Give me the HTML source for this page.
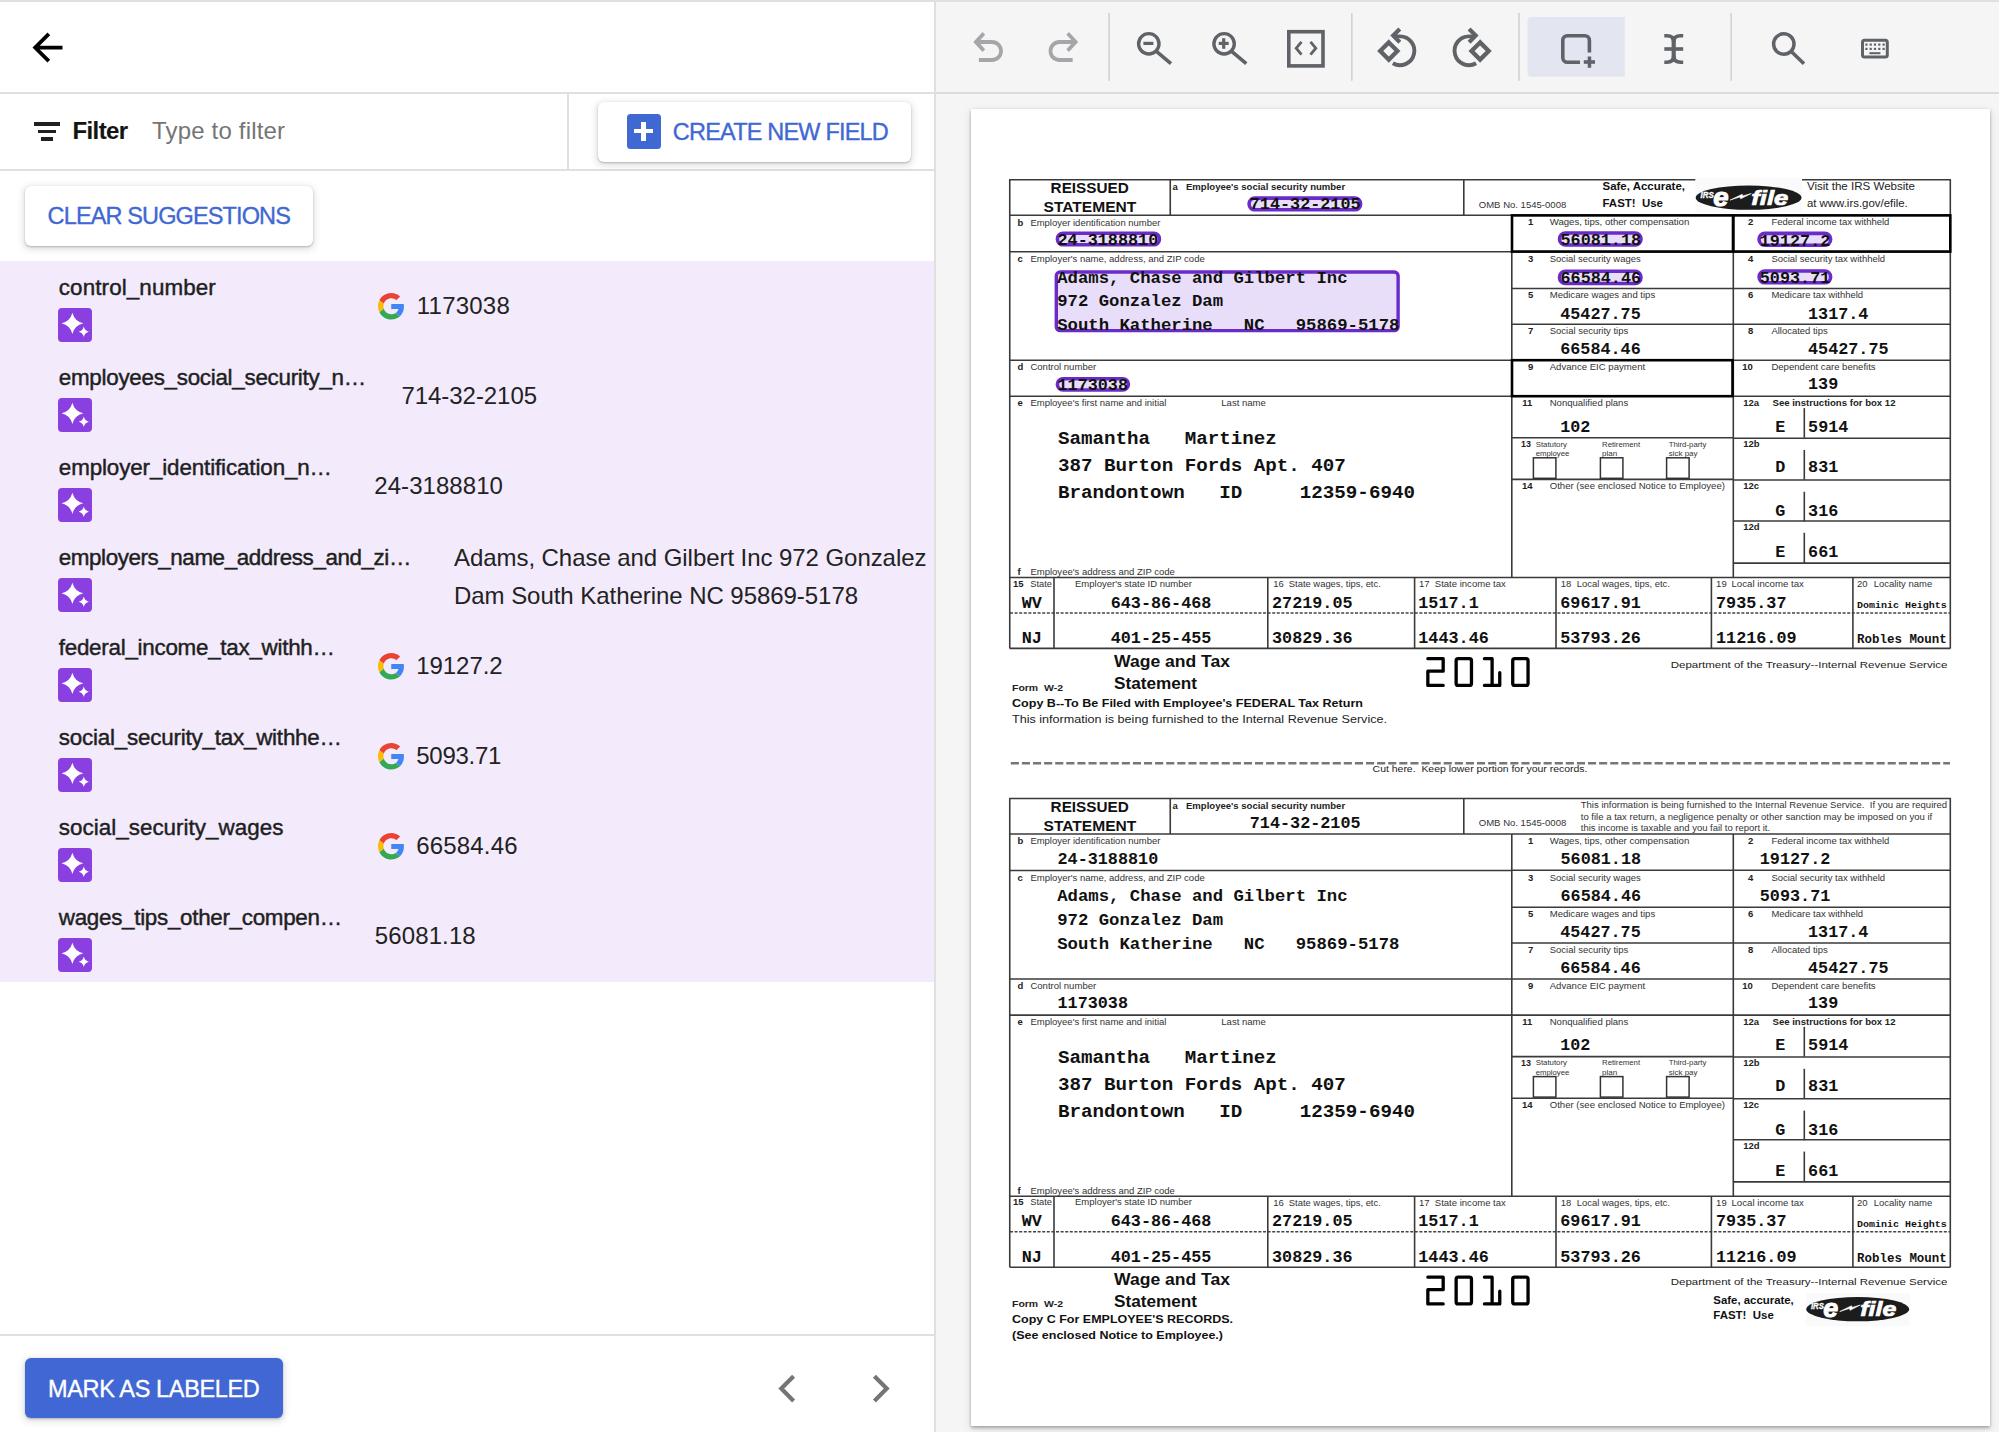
<!DOCTYPE html><html><head><meta charset="utf-8"><title>Labeling</title><style>
*{margin:0;padding:0;box-sizing:border-box}
html,body{width:1999px;height:1432px;overflow:hidden;background:#fff;font-family:"Liberation Sans",sans-serif}
.ht{position:absolute;white-space:pre;line-height:1.1172;font-family:"Liberation Sans",sans-serif}
.abs{position:absolute}
.s{font-family:"Liberation Sans",sans-serif;white-space:pre}
.m{font-family:"Liberation Mono",monospace;white-space:pre}
.docsvg{position:absolute;left:0;top:0}
</style></head><body><div class="abs" style="left:0;top:0;width:935px;height:1432px;background:#fff"></div><svg class="abs" style="left:24.5px;top:24.5px" width="45" height="45" viewBox="0 0 24 24"><path d="M20 11H7.83l5.59-5.59L12 4l-8 8 8 8 1.41-1.41L7.83 13H20v-2z" fill="#000"/></svg><div class="abs" style="left:0;top:92px;width:935px;height:2px;background:#e0e0e0"></div><div class="abs" style="left:34px;top:122px;width:26px;height:4px;background:#212121"></div><div class="abs" style="left:37.6px;top:129.8px;width:18.4px;height:3.6px;background:#212121"></div><div class="abs" style="left:41.2px;top:137.2px;width:11.6px;height:3.8px;background:#212121"></div><div class="ht" style="left:72.50px;top:118.08px;font-size:24.00px;font-weight:bold;letter-spacing:-0.613px;color:#141414;-webkit-text-stroke:0.1px #141414;">Filter</div><div class="ht" style="left:152.00px;top:118.08px;font-size:24.00px;letter-spacing:0.184px;color:#757575;">Type to filter</div><div class="abs" style="left:566.5px;top:94px;width:2px;height:75px;background:#e0e0e0"></div><div class="abs" style="left:0;top:169px;width:935px;height:2px;background:#e0e0e0"></div><div class="abs" style="left:598px;top:101.5px;width:313px;height:60px;border-radius:6px;background:#fff;box-shadow:0 1px 2px rgba(60,64,67,.30),0 2px 6px 2px rgba(60,64,67,.15)"></div><div class="abs" style="left:626.5px;top:114px;width:34px;height:34.5px;border-radius:3.5px;background:#3f68d3"></div><div class="abs" style="left:633.8px;top:129.2px;width:19.4px;height:4.2px;background:#fff"></div><div class="abs" style="left:641.4px;top:121.5px;width:4.2px;height:19.8px;background:#fff"></div><div class="ht" style="left:672.80px;top:118.73px;font-size:23.50px;letter-spacing:-0.804px;color:#3f68d3;-webkit-text-stroke:0.35px #3f68d3;">CREATE NEW FIELD</div><div class="abs" style="left:24.5px;top:186.2px;width:288.5px;height:59.8px;border-radius:6px;background:#fff;box-shadow:0 1px 2px rgba(60,64,67,.30),0 2px 6px 2px rgba(60,64,67,.15)"></div><div class="ht" style="left:47.60px;top:203.33px;font-size:23.50px;letter-spacing:-0.874px;color:#3f68d3;-webkit-text-stroke:0.35px #3f68d3;">CLEAR SUGGESTIONS</div><div class="abs" style="left:0;top:261px;width:935px;height:721px;background:#f3ebfc"></div><div class="ht" style="left:58.80px;top:274.73px;font-size:22.40px;letter-spacing:0.111px;color:#1f1f1f;-webkit-text-stroke:0.45px #1f1f1f;">control_number</div><svg class="abs" style="left:58.0px;top:308.2px" width="34" height="34" viewBox="0 0 34 34"><rect width="34" height="34" rx="4" fill="#8a3fe0"/><path d="M14.40 4.70 Q16.58 13.18 25.30 15.30 Q16.58 17.42 14.40 25.90 Q12.22 17.42 3.50 15.30 Q12.22 13.18 14.40 4.70 Z" fill="#fff"/><path d="M25.80 18.60 Q26.82 22.76 30.90 23.80 Q26.82 24.84 25.80 29.00 Q24.78 24.84 20.70 23.80 Q24.78 22.76 25.80 18.60 Z" fill="#fff"/></svg><svg class="abs" style="left:377.5px;top:293.2px" width="26.5" height="26.5" viewBox="0 0 48 48"><path fill="#EA4335" d="M24 9.5c3.54 0 6.71 1.22 9.21 3.6l6.85-6.85C35.9 2.38 30.47 0 24 0 14.62 0 6.51 5.38 2.56 13.22l7.98 6.19C12.43 13.72 17.74 9.5 24 9.5z"/><path fill="#4285F4" d="M46.98 24.55c0-1.57-.15-3.09-.38-4.55H24v9.02h12.94c-.58 2.96-2.26 5.48-4.78 7.18l7.73 6c4.51-4.18 7.09-10.36 7.09-17.65z"/><path fill="#FBBC05" d="M10.53 28.59c-.48-1.45-.76-2.99-.76-4.59s.27-3.14.76-4.59l-7.98-6.19C.92 16.46 0 20.12 0 24c0 3.88.92 7.54 2.56 10.78l7.97-6.19z"/><path fill="#34A853" d="M24 48c6.48 0 11.93-2.13 15.89-5.81l-7.73-6c-2.15 1.45-4.92 2.3-8.16 2.3-6.26 0-11.57-4.22-13.47-9.91l-7.98 6.19C6.51 42.62 14.62 48 24 48z"/></svg><div class="ht" style="left:416.80px;top:293.28px;font-size:24.00px;letter-spacing:0.221px;color:#222;">1173038</div><div class="ht" style="left:58.80px;top:364.73px;font-size:22.40px;letter-spacing:-0.279px;color:#1f1f1f;-webkit-text-stroke:0.45px #1f1f1f;">employees_social_security_n…</div><svg class="abs" style="left:58.0px;top:398.2px" width="34" height="34" viewBox="0 0 34 34"><rect width="34" height="34" rx="4" fill="#8a3fe0"/><path d="M14.40 4.70 Q16.58 13.18 25.30 15.30 Q16.58 17.42 14.40 25.90 Q12.22 17.42 3.50 15.30 Q12.22 13.18 14.40 4.70 Z" fill="#fff"/><path d="M25.80 18.60 Q26.82 22.76 30.90 23.80 Q26.82 24.84 25.80 29.00 Q24.78 24.84 20.70 23.80 Q24.78 22.76 25.80 18.60 Z" fill="#fff"/></svg><div class="ht" style="left:401.50px;top:383.28px;font-size:24.00px;letter-spacing:-0.056px;color:#222;">714-32-2105</div><div class="ht" style="left:58.80px;top:454.73px;font-size:22.40px;letter-spacing:-0.124px;color:#1f1f1f;-webkit-text-stroke:0.45px #1f1f1f;">employer_identification_n…</div><svg class="abs" style="left:58.0px;top:488.2px" width="34" height="34" viewBox="0 0 34 34"><rect width="34" height="34" rx="4" fill="#8a3fe0"/><path d="M14.40 4.70 Q16.58 13.18 25.30 15.30 Q16.58 17.42 14.40 25.90 Q12.22 17.42 3.50 15.30 Q12.22 13.18 14.40 4.70 Z" fill="#fff"/><path d="M25.80 18.60 Q26.82 22.76 30.90 23.80 Q26.82 24.84 25.80 29.00 Q24.78 24.84 20.70 23.80 Q24.78 22.76 25.80 18.60 Z" fill="#fff"/></svg><div class="ht" style="left:374.30px;top:473.28px;font-size:24.00px;letter-spacing:0.057px;color:#222;">24-3188810</div><div class="ht" style="left:58.80px;top:544.73px;font-size:22.40px;letter-spacing:-0.421px;color:#1f1f1f;-webkit-text-stroke:0.45px #1f1f1f;">employers_name_address_and_zi…</div><svg class="abs" style="left:58.0px;top:578.2px" width="34" height="34" viewBox="0 0 34 34"><rect width="34" height="34" rx="4" fill="#8a3fe0"/><path d="M14.40 4.70 Q16.58 13.18 25.30 15.30 Q16.58 17.42 14.40 25.90 Q12.22 17.42 3.50 15.30 Q12.22 13.18 14.40 4.70 Z" fill="#fff"/><path d="M25.80 18.60 Q26.82 22.76 30.90 23.80 Q26.82 24.84 25.80 29.00 Q24.78 24.84 20.70 23.80 Q24.78 22.76 25.80 18.60 Z" fill="#fff"/></svg><div class="ht" style="left:454.00px;top:545.08px;font-size:24.00px;letter-spacing:-0.062px;color:#222;">Adams, Chase and Gilbert Inc 972 Gonzalez</div><div class="ht" style="left:454.00px;top:582.58px;font-size:24.00px;letter-spacing:-0.048px;color:#222;">Dam South Katherine NC 95869-5178</div><div class="ht" style="left:58.80px;top:634.73px;font-size:22.40px;letter-spacing:-0.266px;color:#1f1f1f;-webkit-text-stroke:0.45px #1f1f1f;">federal_income_tax_withh…</div><svg class="abs" style="left:58.0px;top:668.2px" width="34" height="34" viewBox="0 0 34 34"><rect width="34" height="34" rx="4" fill="#8a3fe0"/><path d="M14.40 4.70 Q16.58 13.18 25.30 15.30 Q16.58 17.42 14.40 25.90 Q12.22 17.42 3.50 15.30 Q12.22 13.18 14.40 4.70 Z" fill="#fff"/><path d="M25.80 18.60 Q26.82 22.76 30.90 23.80 Q26.82 24.84 25.80 29.00 Q24.78 24.84 20.70 23.80 Q24.78 22.76 25.80 18.60 Z" fill="#fff"/></svg><svg class="abs" style="left:377.5px;top:653.2px" width="26.5" height="26.5" viewBox="0 0 48 48"><path fill="#EA4335" d="M24 9.5c3.54 0 6.71 1.22 9.21 3.6l6.85-6.85C35.9 2.38 30.47 0 24 0 14.62 0 6.51 5.38 2.56 13.22l7.98 6.19C12.43 13.72 17.74 9.5 24 9.5z"/><path fill="#4285F4" d="M46.98 24.55c0-1.57-.15-3.09-.38-4.55H24v9.02h12.94c-.58 2.96-2.26 5.48-4.78 7.18l7.73 6c4.51-4.18 7.09-10.36 7.09-17.65z"/><path fill="#FBBC05" d="M10.53 28.59c-.48-1.45-.76-2.99-.76-4.59s.27-3.14.76-4.59l-7.98-6.19C.92 16.46 0 20.12 0 24c0 3.88.92 7.54 2.56 10.78l7.97-6.19z"/><path fill="#34A853" d="M24 48c6.48 0 11.93-2.13 15.89-5.81l-7.73-6c-2.15 1.45-4.92 2.3-8.16 2.3-6.26 0-11.57-4.22-13.47-9.91l-7.98 6.19C6.51 42.62 14.62 48 24 48z"/></svg><div class="ht" style="left:416.20px;top:653.28px;font-size:24.00px;letter-spacing:-0.037px;color:#222;">19127.2</div><div class="ht" style="left:58.80px;top:724.73px;font-size:22.40px;letter-spacing:-0.213px;color:#1f1f1f;-webkit-text-stroke:0.45px #1f1f1f;">social_security_tax_withhe…</div><svg class="abs" style="left:58.0px;top:758.2px" width="34" height="34" viewBox="0 0 34 34"><rect width="34" height="34" rx="4" fill="#8a3fe0"/><path d="M14.40 4.70 Q16.58 13.18 25.30 15.30 Q16.58 17.42 14.40 25.90 Q12.22 17.42 3.50 15.30 Q12.22 13.18 14.40 4.70 Z" fill="#fff"/><path d="M25.80 18.60 Q26.82 22.76 30.90 23.80 Q26.82 24.84 25.80 29.00 Q24.78 24.84 20.70 23.80 Q24.78 22.76 25.80 18.60 Z" fill="#fff"/></svg><svg class="abs" style="left:377.5px;top:743.2px" width="26.5" height="26.5" viewBox="0 0 48 48"><path fill="#EA4335" d="M24 9.5c3.54 0 6.71 1.22 9.21 3.6l6.85-6.85C35.9 2.38 30.47 0 24 0 14.62 0 6.51 5.38 2.56 13.22l7.98 6.19C12.43 13.72 17.74 9.5 24 9.5z"/><path fill="#4285F4" d="M46.98 24.55c0-1.57-.15-3.09-.38-4.55H24v9.02h12.94c-.58 2.96-2.26 5.48-4.78 7.18l7.73 6c4.51-4.18 7.09-10.36 7.09-17.65z"/><path fill="#FBBC05" d="M10.53 28.59c-.48-1.45-.76-2.99-.76-4.59s.27-3.14.76-4.59l-7.98-6.19C.92 16.46 0 20.12 0 24c0 3.88.92 7.54 2.56 10.78l7.97-6.19z"/><path fill="#34A853" d="M24 48c6.48 0 11.93-2.13 15.89-5.81l-7.73-6c-2.15 1.45-4.92 2.3-8.16 2.3-6.26 0-11.57-4.22-13.47-9.91l-7.98 6.19C6.51 42.62 14.62 48 24 48z"/></svg><div class="ht" style="left:416.20px;top:743.28px;font-size:24.00px;letter-spacing:-0.251px;color:#222;">5093.71</div><div class="ht" style="left:58.80px;top:814.73px;font-size:22.40px;letter-spacing:0.028px;color:#1f1f1f;-webkit-text-stroke:0.45px #1f1f1f;">social_security_wages</div><svg class="abs" style="left:58.0px;top:848.2px" width="34" height="34" viewBox="0 0 34 34"><rect width="34" height="34" rx="4" fill="#8a3fe0"/><path d="M14.40 4.70 Q16.58 13.18 25.30 15.30 Q16.58 17.42 14.40 25.90 Q12.22 17.42 3.50 15.30 Q12.22 13.18 14.40 4.70 Z" fill="#fff"/><path d="M25.80 18.60 Q26.82 22.76 30.90 23.80 Q26.82 24.84 25.80 29.00 Q24.78 24.84 20.70 23.80 Q24.78 22.76 25.80 18.60 Z" fill="#fff"/></svg><svg class="abs" style="left:377.5px;top:833.2px" width="26.5" height="26.5" viewBox="0 0 48 48"><path fill="#EA4335" d="M24 9.5c3.54 0 6.71 1.22 9.21 3.6l6.85-6.85C35.9 2.38 30.47 0 24 0 14.62 0 6.51 5.38 2.56 13.22l7.98 6.19C12.43 13.72 17.74 9.5 24 9.5z"/><path fill="#4285F4" d="M46.98 24.55c0-1.57-.15-3.09-.38-4.55H24v9.02h12.94c-.58 2.96-2.26 5.48-4.78 7.18l7.73 6c4.51-4.18 7.09-10.36 7.09-17.65z"/><path fill="#FBBC05" d="M10.53 28.59c-.48-1.45-.76-2.99-.76-4.59s.27-3.14.76-4.59l-7.98-6.19C.92 16.46 0 20.12 0 24c0 3.88.92 7.54 2.56 10.78l7.97-6.19z"/><path fill="#34A853" d="M24 48c6.48 0 11.93-2.13 15.89-5.81l-7.73-6c-2.15 1.45-4.92 2.3-8.16 2.3-6.26 0-11.57-4.22-13.47-9.91l-7.98 6.19C6.51 42.62 14.62 48 24 48z"/></svg><div class="ht" style="left:416.20px;top:833.28px;font-size:24.00px;letter-spacing:0.174px;color:#222;">66584.46</div><div class="ht" style="left:58.80px;top:904.73px;font-size:22.40px;letter-spacing:-0.293px;color:#1f1f1f;-webkit-text-stroke:0.45px #1f1f1f;">wages_tips_other_compen…</div><svg class="abs" style="left:58.0px;top:938.2px" width="34" height="34" viewBox="0 0 34 34"><rect width="34" height="34" rx="4" fill="#8a3fe0"/><path d="M14.40 4.70 Q16.58 13.18 25.30 15.30 Q16.58 17.42 14.40 25.90 Q12.22 17.42 3.50 15.30 Q12.22 13.18 14.40 4.70 Z" fill="#fff"/><path d="M25.80 18.60 Q26.82 22.76 30.90 23.80 Q26.82 24.84 25.80 29.00 Q24.78 24.84 20.70 23.80 Q24.78 22.76 25.80 18.60 Z" fill="#fff"/></svg><div class="ht" style="left:374.80px;top:923.28px;font-size:24.00px;letter-spacing:0.112px;color:#222;">56081.18</div><div class="abs" style="left:0;top:1334px;width:935px;height:2px;background:#e0e0e0"></div><div class="abs" style="left:24.5px;top:1358.4px;width:258px;height:59.6px;border-radius:6px;background:#4067d3;box-shadow:0 1px 2px rgba(60,64,67,.30),0 2px 6px 2px rgba(60,64,67,.15)"></div><div class="ht" style="left:48.00px;top:1376.03px;font-size:23.50px;letter-spacing:-0.361px;color:#fff;-webkit-text-stroke:0.35px #fff;">MARK AS LABELED</div><svg class="abs" style="left:750px;top:1360px" width="180" height="60" viewBox="750 1360 180 60"><path d="M793.6 1376.3 L781.3 1388.6 L793.6 1400.9" fill="none" stroke="#757575" stroke-width="4.2"/><path d="M874.4 1376.3 L886.7 1388.6 L874.4 1400.9" fill="none" stroke="#757575" stroke-width="4.2"/></svg><div class="abs" style="left:934px;top:0;width:2px;height:1432px;background:#e0e0e0"></div><div class="abs" style="left:936px;top:0;width:1063px;height:1432px;background:#f5f5f5"></div><div class="abs" style="left:936px;top:92px;width:1063px;height:2px;background:#dcdcdc"></div><div class="abs" style="left:0;top:0;width:1999px;height:2px;background:#e0e0e0"></div><svg class="abs" style="left:936px;top:0" width="1063" height="92" viewBox="936 0 1063 92"><rect x="1108.3" y="13" width="1.6" height="67.8" fill="#d2d2d2"/><rect x="1351.0" y="13" width="1.6" height="67.8" fill="#d2d2d2"/><rect x="1518.2" y="13" width="1.6" height="67.8" fill="#d2d2d2"/><rect x="1730.4" y="13" width="1.6" height="67.8" fill="#d2d2d2"/><path d="M1531.5 17 H1624.8 V76.8 H1531.5 A4 4 0 0 1 1527.5 72.8 V21 A4 4 0 0 1 1531.5 17Z" fill="#e3e5f1"/><path transform="translate(965.900 72.000) scale(0.04625 0.05000)" d="M280-200v-80h284q63 0 109.5-40T720-420q0-60-46.5-100T564-560H312l104 104-56 56-200-200 200-200 56 56-104 104h252q97 0 166.5 63T800-420q0 94-69.5 157T564-200H280Z" fill="#a4a6aa"/><path transform="translate(1041.200 72.000) scale(0.04625 0.05000)" d="M396-200q-97 0-166.5-63T160-420q0-94 69.5-157T396-640h252L544-744l56-56 200 200-200 200-56-56 104-104H396q-63 0-109.5 40T240-420q0 60 46.5 100T396-280h284v80H396Z" fill="#a4a6aa"/><circle cx="1148.80" cy="43.80" r="10.2" fill="none" stroke="#5f6368" stroke-width="3.4"/><line x1="1155.80" y1="50.80" x2="1171.00" y2="63.60" stroke="#5f6368" stroke-width="3.6"/><rect x="1143.40" y="41.80" width="10" height="3.2" fill="#5f6368"/><circle cx="1224.10" cy="43.80" r="10.2" fill="none" stroke="#5f6368" stroke-width="3.4"/><line x1="1231.10" y1="50.80" x2="1246.30" y2="63.60" stroke="#5f6368" stroke-width="3.6"/><rect x="1218.70" y="41.80" width="10" height="3.2" fill="#5f6368"/><rect x="1222.10" y="38.20" width="3.2" height="10.6" fill="#5f6368"/><rect x="1288.8" y="31.7" width="34.2" height="34.2" fill="none" stroke="#5f6368" stroke-width="3.6"/><path d="M1301.5 41.8 L1296.2 48.2 L1301.5 54.6 M1310.5 41.8 L1315.8 48.2 L1310.5 54.6" fill="none" stroke="#5f6368" stroke-width="2.8"/><g transform="translate(1377.20 0) scale(1 1)"><path d="M11.6 42.4 L20.2 51 L11.6 59.6 L3.0 51 Z" fill="none" stroke="#5f6368" stroke-width="4.3"/><path d="M15.6 63.3 A14.4 14.4 0 1 0 22.8 36.4 L18 36.4" fill="none" stroke="#5f6368" stroke-width="3.9"/><path d="M22.6 29.0 L16.0 35.6 L22.6 42.2" fill="none" stroke="#5f6368" stroke-width="4.1"/></g><g transform="translate(1491.70 0) scale(-1 1)"><path d="M11.6 42.4 L20.2 51 L11.6 59.6 L3.0 51 Z" fill="none" stroke="#5f6368" stroke-width="4.3"/><path d="M15.6 63.3 A14.4 14.4 0 1 0 22.8 36.4 L18 36.4" fill="none" stroke="#5f6368" stroke-width="3.9"/><path d="M22.6 29.0 L16.0 35.6 L22.6 42.2" fill="none" stroke="#5f6368" stroke-width="4.1"/></g><path d="M1580 62.2 H1567.3 A4.5 4.5 0 0 1 1562.8 57.7 V40.3 A4.5 4.5 0 0 1 1567.3 35.8 H1584.9 A4.5 4.5 0 0 1 1589.4 40.3 V52.6" fill="none" stroke="#5f6368" stroke-width="3.6"/><rect x="1587.7" y="56.5" width="3.5" height="11.3" fill="#5f6368"/><rect x="1583.8" y="60.2" width="11.2" height="3.6" fill="#5f6368"/><rect x="1671.6" y="36" width="4.2" height="26" fill="#5f6368"/><rect x="1664.3" y="47.2" width="18.9" height="3.6" fill="#5f6368"/><path d="M1664.3 35.8 H1667 Q1673.7 35.8 1673.7 42 Q1673.7 35.8 1680.5 35.8 H1683.2" fill="none" stroke="#5f6368" stroke-width="3.6"/><path d="M1664.3 62.2 H1667 Q1673.7 62.2 1673.7 56 Q1673.7 62.2 1680.5 62.2 H1683.2" fill="none" stroke="#5f6368" stroke-width="3.6"/><circle cx="1783.8" cy="44" r="10.2" fill="none" stroke="#5f6368" stroke-width="3.5"/><line x1="1791" y1="51.2" x2="1804" y2="63.8" stroke="#5f6368" stroke-width="3.6"/><rect x="1862.5" y="40.3" width="24.8" height="16.8" rx="2" fill="none" stroke="#5f6368" stroke-width="3"/><rect x="1865.30" y="43.50" width="2.2" height="2.2" fill="#5f6368"/><rect x="1869.60" y="43.50" width="2.2" height="2.2" fill="#5f6368"/><rect x="1873.90" y="43.50" width="2.2" height="2.2" fill="#5f6368"/><rect x="1878.20" y="43.50" width="2.2" height="2.2" fill="#5f6368"/><rect x="1882.50" y="43.50" width="2.2" height="2.2" fill="#5f6368"/><rect x="1865.30" y="47.80" width="2.2" height="2.2" fill="#5f6368"/><rect x="1869.60" y="47.80" width="2.2" height="2.2" fill="#5f6368"/><rect x="1873.90" y="47.80" width="2.2" height="2.2" fill="#5f6368"/><rect x="1878.20" y="47.80" width="2.2" height="2.2" fill="#5f6368"/><rect x="1882.50" y="47.80" width="2.2" height="2.2" fill="#5f6368"/><rect x="1869.4" y="52.2" width="11" height="2" fill="#5f6368"/></svg><div class="abs" style="left:971px;top:109px;width:1019px;height:1317px;background:#fff;box-shadow:0 2px 3px rgba(0,0,0,.26),0 3px 10px rgba(0,0,0,.10),0 0 2px rgba(0,0,0,.10)"><svg class="docsvg" width="1019" height="1317" viewBox="971 109 1019 1317"><line x1="1009.05" y1="179.75" x2="1695.60" y2="179.75" stroke="#3a3a3a" stroke-width="1.60"/><line x1="1801.50" y1="179.75" x2="1951.00" y2="179.75" stroke="#3a3a3a" stroke-width="1.60"/><rect x="1695.5" y="178.00" width="106.5" height="35" fill="#fafafa"/><line x1="1009.75" y1="179.75" x2="1009.75" y2="648.40" stroke="#3a3a3a" stroke-width="1.60"/><line x1="1950.30" y1="179.75" x2="1950.30" y2="648.40" stroke="#3a3a3a" stroke-width="1.60"/><line x1="1170.25" y1="179.75" x2="1170.25" y2="215.25" stroke="#3a3a3a" stroke-width="1.60"/><line x1="1463.80" y1="179.75" x2="1463.80" y2="215.25" stroke="#3a3a3a" stroke-width="1.60"/><line x1="1009.75" y1="215.25" x2="1511.80" y2="215.25" stroke="#3a3a3a" stroke-width="1.60"/><line x1="1009.75" y1="251.70" x2="1511.80" y2="251.70" stroke="#3a3a3a" stroke-width="1.60"/><line x1="1009.75" y1="360.20" x2="1511.80" y2="360.20" stroke="#3a3a3a" stroke-width="1.60"/><line x1="1009.75" y1="396.30" x2="1511.80" y2="396.30" stroke="#3a3a3a" stroke-width="1.60"/><line x1="1511.80" y1="215.20" x2="1511.80" y2="577.50" stroke="#3a3a3a" stroke-width="1.60"/><line x1="1733.30" y1="215.20" x2="1733.30" y2="577.50" stroke="#3a3a3a" stroke-width="1.60"/><line x1="1511.80" y1="215.25" x2="1950.30" y2="215.25" stroke="#3a3a3a" stroke-width="1.60"/><line x1="1511.80" y1="251.50" x2="1950.30" y2="251.50" stroke="#3a3a3a" stroke-width="1.60"/><line x1="1511.80" y1="288.50" x2="1950.30" y2="288.50" stroke="#3a3a3a" stroke-width="1.60"/><line x1="1511.80" y1="324.20" x2="1950.30" y2="324.20" stroke="#3a3a3a" stroke-width="1.60"/><line x1="1511.80" y1="360.20" x2="1950.30" y2="360.20" stroke="#3a3a3a" stroke-width="1.60"/><line x1="1511.80" y1="396.30" x2="1950.30" y2="396.30" stroke="#3a3a3a" stroke-width="1.60"/><line x1="1511.80" y1="437.80" x2="1733.30" y2="437.80" stroke="#3a3a3a" stroke-width="1.60"/><line x1="1511.80" y1="479.40" x2="1733.30" y2="479.40" stroke="#3a3a3a" stroke-width="1.60"/><line x1="1733.30" y1="438.20" x2="1950.30" y2="438.20" stroke="#3a3a3a" stroke-width="1.60"/><line x1="1733.30" y1="480.00" x2="1950.30" y2="480.00" stroke="#3a3a3a" stroke-width="1.60"/><line x1="1733.30" y1="521.00" x2="1950.30" y2="521.00" stroke="#3a3a3a" stroke-width="1.60"/><line x1="1733.30" y1="563.10" x2="1950.30" y2="563.10" stroke="#3a3a3a" stroke-width="1.60"/><line x1="1804.30" y1="408.10" x2="1804.30" y2="437.80" stroke="#3a3a3a" stroke-width="1.60"/><line x1="1804.30" y1="450.00" x2="1804.30" y2="479.70" stroke="#3a3a3a" stroke-width="1.60"/><line x1="1804.30" y1="491.80" x2="1804.30" y2="521.50" stroke="#3a3a3a" stroke-width="1.60"/><line x1="1804.30" y1="532.80" x2="1804.30" y2="563.10" stroke="#3a3a3a" stroke-width="1.60"/><rect x="1512" y="215.40" width="221" height="36.2" fill="none" stroke="#000" stroke-width="2.60"/><rect x="1733.3" y="215.40" width="217" height="36.2" fill="none" stroke="#000" stroke-width="2.60"/><rect x="1512" y="360.20" width="220.5" height="36" fill="none" stroke="#000" stroke-width="2.60"/><rect x="1533.40" y="457.80" width="22.5" height="20.5" fill="none" stroke="#333" stroke-width="1.5"/><rect x="1600.40" y="457.80" width="22.5" height="20.5" fill="none" stroke="#333" stroke-width="1.5"/><rect x="1666.60" y="457.80" width="22.5" height="20.5" fill="none" stroke="#333" stroke-width="1.5"/><line x1="1009.75" y1="577.50" x2="1950.30" y2="577.50" stroke="#3a3a3a" stroke-width="1.60"/><line x1="1009.75" y1="648.40" x2="1950.30" y2="648.40" stroke="#3a3a3a" stroke-width="1.60"/><line x1="1010" y1="613.00" x2="1950" y2="613.00" stroke="#444" stroke-width="1.5" stroke-dasharray="3 1.6"/><line x1="1054.00" y1="577.50" x2="1054.00" y2="648.40" stroke="#3a3a3a" stroke-width="1.60"/><line x1="1267.80" y1="577.50" x2="1267.80" y2="648.40" stroke="#3a3a3a" stroke-width="1.60"/><line x1="1414.60" y1="577.50" x2="1414.60" y2="648.40" stroke="#3a3a3a" stroke-width="1.60"/><line x1="1556.00" y1="577.50" x2="1556.00" y2="648.40" stroke="#3a3a3a" stroke-width="1.60"/><line x1="1711.40" y1="577.50" x2="1711.40" y2="648.40" stroke="#3a3a3a" stroke-width="1.60"/><line x1="1852.90" y1="577.50" x2="1852.90" y2="648.40" stroke="#3a3a3a" stroke-width="1.60"/><text class="s" x="1089.70" y="192.75" font-size="15.30" font-weight="bold" fill="#111" textLength="78.20" lengthAdjust="spacingAndGlyphs" text-anchor="middle">REISSUED</text><text class="s" x="1089.90" y="212.25" font-size="15.40" font-weight="bold" fill="#111" textLength="92.70" lengthAdjust="spacingAndGlyphs" text-anchor="middle">STATEMENT</text><text class="s" x="1172.50" y="189.75" font-size="9.50" font-weight="bold" fill="#222">a</text><text class="s" x="1186.00" y="189.70" font-size="9.50" font-weight="bold" fill="#222" textLength="159.10" lengthAdjust="spacingAndGlyphs">Employee&#x27;s social security number</text><text class="s" x="1478.75" y="207.60" font-size="9.50" fill="#333" textLength="87.50" lengthAdjust="spacingAndGlyphs">OMB No. 1545-0008</text><text class="s" x="1602.50" y="189.50" font-size="11.40" font-weight="bold" fill="#111" textLength="82.50" lengthAdjust="spacingAndGlyphs">Safe, Accurate,</text><text class="s" x="1602.50" y="207.25" font-size="11.40" font-weight="bold" fill="#111" textLength="60.50" lengthAdjust="spacingAndGlyphs">FAST!  Use</text><g><ellipse cx="1748.60" cy="197.65" rx="52.90" ry="12.15" fill="#1c1c1c"/><text x="1700.46" y="197.89" font-size="8.75" font-weight="bold" font-style="italic" fill="#fff" stroke="#fff" stroke-width="0.30" class="s" textLength="13.22" lengthAdjust="spacingAndGlyphs">IRS</text><text x="1713.16" y="205.67" font-size="25.52" font-weight="bold" font-style="italic" fill="#fff" stroke="#fff" stroke-width="1.00" class="s" textLength="15.34" lengthAdjust="spacingAndGlyphs">e</text><text x="1751.25" y="204.94" font-size="19.93" font-weight="bold" font-style="italic" fill="#fff" stroke="#fff" stroke-width="0.70" class="s" textLength="37.03" lengthAdjust="spacingAndGlyphs">file</text><path d="M1730.09 200.08 L1740.14 196.92 L1740.66 198.87 L1751.25 193.52 L1742.78 195.95 L1742.25 194.25 Z" fill="#fff" stroke="#fff" stroke-width="0.6"/></g><text class="s" x="1806.90" y="189.80" font-size="11.40" fill="#222" textLength="108.10" lengthAdjust="spacingAndGlyphs">Visit the IRS Website</text><text class="s" x="1806.90" y="207.40" font-size="11.40" fill="#222" textLength="100.90" lengthAdjust="spacingAndGlyphs">at www.irs.gov/efile.</text><text class="s" x="1017.50" y="225.60" font-size="9.50" font-weight="bold" fill="#222">b</text><text class="s" x="1030.40" y="225.60" font-size="9.50" fill="#333" textLength="130.00" lengthAdjust="spacingAndGlyphs">Employer identification number</text><text class="s" x="1017.50" y="262.00" font-size="9.50" font-weight="bold" fill="#222">c</text><text class="s" x="1030.40" y="262.00" font-size="9.50" fill="#333" textLength="174.40" lengthAdjust="spacingAndGlyphs">Employer&#x27;s name, address, and ZIP code</text><text class="s" x="1017.50" y="370.00" font-size="9.50" font-weight="bold" fill="#222">d</text><text class="s" x="1030.40" y="370.00" font-size="9.50" fill="#333" textLength="65.80" lengthAdjust="spacingAndGlyphs">Control number</text><text class="s" x="1017.50" y="405.90" font-size="9.50" font-weight="bold" fill="#222">e</text><text class="s" x="1030.40" y="405.90" font-size="9.50" fill="#333" textLength="136.00" lengthAdjust="spacingAndGlyphs">Employee&#x27;s first name and initial</text><text class="s" x="1017.50" y="574.70" font-size="9.50" font-weight="bold" fill="#222">f</text><text class="s" x="1030.40" y="574.70" font-size="9.50" fill="#333" textLength="144.50" lengthAdjust="spacingAndGlyphs">Employee&#x27;s address and ZIP code</text><text class="s" x="1221.30" y="405.90" font-size="9.50" fill="#333" textLength="44.60" lengthAdjust="spacingAndGlyphs">Last name</text><rect x="1249.10" y="198.10" width="111.50" height="11.70" rx="5.70" fill="#e9defa" stroke="#6a2bc8" stroke-width="3.60"/><rect x="1057.40" y="233.20" width="102.05" height="11.60" rx="5.70" fill="#e9defa" stroke="#6a2bc8" stroke-width="3.60"/><rect x="1056.30" y="272.00" width="341.80" height="58.60" rx="3.80" fill="#e9defa" stroke="#6a2bc8" stroke-width="3.40"/><rect x="1057.40" y="378.70" width="71.00" height="11.30" rx="5.65" fill="#e9defa" stroke="#6a2bc8" stroke-width="3.60"/><rect x="1559.55" y="233.05" width="81.40" height="11.90" rx="5.70" fill="#e9defa" stroke="#6a2bc8" stroke-width="3.60"/><rect x="1759.10" y="233.40" width="71.50" height="11.80" rx="5.70" fill="#e9defa" stroke="#6a2bc8" stroke-width="3.60"/><rect x="1559.55" y="271.30" width="81.40" height="12.20" rx="5.70" fill="#e9defa" stroke="#6a2bc8" stroke-width="3.60"/><rect x="1759.10" y="271.00" width="71.50" height="11.80" rx="5.70" fill="#e9defa" stroke="#6a2bc8" stroke-width="3.60"/><text class="m" x="1249.80" y="209.20" font-size="16.80" font-weight="bold" fill="#111">714-32-2105</text><text class="m" x="1057.50" y="245.00" font-size="16.80" font-weight="bold" fill="#111">24-3188810</text><text class="m" x="1057.20" y="282.60" font-size="17.30" font-weight="bold" fill="#111">Adams, Chase and Gilbert Inc</text><text class="m" x="1057.20" y="306.20" font-size="17.30" font-weight="bold" fill="#111">972 Gonzalez Dam</text><text class="m" x="1057.20" y="329.80" font-size="17.30" font-weight="bold" fill="#111">South Katherine   NC   95869-5178</text><text class="m" x="1057.50" y="389.50" font-size="16.80" font-weight="bold" fill="#111">1173038</text><text class="m" x="1058.00" y="443.80" font-size="19.20" font-weight="bold" fill="#111">Samantha   Martinez</text><text class="m" x="1058.00" y="471.30" font-size="19.20" font-weight="bold" fill="#111">387 Burton Fords Apt. 407</text><text class="m" x="1058.00" y="498.30" font-size="19.20" font-weight="bold" fill="#111">Brandontown   ID     12359-6940</text><text class="s" x="1530.60" y="225.40" font-size="9.50" font-weight="bold" fill="#222" text-anchor="middle">1</text><text class="s" x="1549.70" y="225.40" font-size="9.50" fill="#333" textLength="139.60" lengthAdjust="spacingAndGlyphs">Wages, tips, other compensation</text><text class="s" x="1530.60" y="261.90" font-size="9.50" font-weight="bold" fill="#222" text-anchor="middle">3</text><text class="s" x="1549.70" y="261.90" font-size="9.50" fill="#333" textLength="91.00" lengthAdjust="spacingAndGlyphs">Social security wages</text><text class="s" x="1530.60" y="298.00" font-size="9.50" font-weight="bold" fill="#222" text-anchor="middle">5</text><text class="s" x="1549.70" y="298.00" font-size="9.50" fill="#333" textLength="105.50" lengthAdjust="spacingAndGlyphs">Medicare wages and tips</text><text class="s" x="1530.60" y="334.00" font-size="9.50" font-weight="bold" fill="#222" text-anchor="middle">7</text><text class="s" x="1549.70" y="334.00" font-size="9.50" fill="#333" textLength="78.50" lengthAdjust="spacingAndGlyphs">Social security tips</text><text class="s" x="1530.60" y="370.00" font-size="9.50" font-weight="bold" fill="#222" text-anchor="middle">9</text><text class="s" x="1549.70" y="370.00" font-size="9.50" fill="#333" textLength="95.50" lengthAdjust="spacingAndGlyphs">Advance EIC payment</text><text class="s" x="1527.20" y="406.00" font-size="9.50" font-weight="bold" fill="#222" text-anchor="middle">11</text><text class="s" x="1549.70" y="406.00" font-size="9.50" fill="#333" textLength="78.50" lengthAdjust="spacingAndGlyphs">Nonqualified plans</text><text class="s" x="1527.20" y="489.20" font-size="9.50" font-weight="bold" fill="#222" text-anchor="middle">14</text><text class="s" x="1549.70" y="489.20" font-size="9.50" fill="#333" textLength="175.30" lengthAdjust="spacingAndGlyphs">Other (see enclosed Notice to Employee)</text><text class="s" x="1521.00" y="447.30" font-size="9.90" font-weight="bold" fill="#222" textLength="9.90" lengthAdjust="spacingAndGlyphs">13</text><text class="s" x="1535.70" y="446.60" font-size="7.60" fill="#333" textLength="31.30" lengthAdjust="spacingAndGlyphs">Statutory</text><text class="s" x="1535.70" y="456.40" font-size="7.60" fill="#333" textLength="33.60" lengthAdjust="spacingAndGlyphs">employee</text><text class="s" x="1602.00" y="446.60" font-size="7.60" fill="#333" textLength="38.10" lengthAdjust="spacingAndGlyphs">Retirement</text><text class="s" x="1602.00" y="456.40" font-size="7.60" fill="#333" textLength="15.20" lengthAdjust="spacingAndGlyphs">plan</text><text class="s" x="1668.70" y="446.60" font-size="7.60" fill="#333" textLength="37.70" lengthAdjust="spacingAndGlyphs">Third-party</text><text class="s" x="1668.70" y="456.40" font-size="7.60" fill="#333" textLength="28.80" lengthAdjust="spacingAndGlyphs">sick pay</text><text class="s" x="1750.60" y="225.40" font-size="9.50" font-weight="bold" fill="#222" text-anchor="middle">2</text><text class="s" x="1771.40" y="225.40" font-size="9.50" fill="#333" textLength="118.00" lengthAdjust="spacingAndGlyphs">Federal income tax withheld</text><text class="s" x="1750.60" y="261.90" font-size="9.50" font-weight="bold" fill="#222" text-anchor="middle">4</text><text class="s" x="1771.40" y="261.90" font-size="9.50" fill="#333" textLength="113.75" lengthAdjust="spacingAndGlyphs">Social security tax withheld</text><text class="s" x="1750.60" y="298.00" font-size="9.50" font-weight="bold" fill="#222" text-anchor="middle">6</text><text class="s" x="1771.40" y="298.00" font-size="9.50" fill="#333" textLength="91.75" lengthAdjust="spacingAndGlyphs">Medicare tax withheld</text><text class="s" x="1750.60" y="334.00" font-size="9.50" font-weight="bold" fill="#222" text-anchor="middle">8</text><text class="s" x="1771.40" y="334.00" font-size="9.50" fill="#333" textLength="56.25" lengthAdjust="spacingAndGlyphs">Allocated tips</text><text class="s" x="1747.50" y="370.00" font-size="9.50" font-weight="bold" fill="#222" text-anchor="middle">10</text><text class="s" x="1771.40" y="370.00" font-size="9.50" fill="#333" textLength="104.25" lengthAdjust="spacingAndGlyphs">Dependent care benefits</text><text class="s" x="1743.20" y="406.00" font-size="9.50" font-weight="bold" fill="#222">12a</text><text class="s" x="1772.50" y="406.00" font-size="9.50" font-weight="bold" fill="#222" textLength="123.00" lengthAdjust="spacingAndGlyphs">See instructions for box 12</text><text class="s" x="1743.20" y="447.20" font-size="9.50" font-weight="bold" fill="#222">12b</text><text class="s" x="1743.20" y="489.10" font-size="9.50" font-weight="bold" fill="#222">12c</text><text class="s" x="1743.20" y="530.30" font-size="9.50" font-weight="bold" fill="#222">12d</text><text class="m" x="1560.50" y="245.20" font-size="16.80" font-weight="bold" fill="#111">56081.18</text><text class="m" x="1560.50" y="282.60" font-size="16.80" font-weight="bold" fill="#111">66584.46</text><text class="m" x="1560.20" y="318.60" font-size="16.80" font-weight="bold" fill="#111">45427.75</text><text class="m" x="1560.20" y="354.20" font-size="16.80" font-weight="bold" fill="#111">66584.46</text><text class="m" x="1560.20" y="431.60" font-size="16.80" font-weight="bold" fill="#111">102</text><text class="m" x="1759.80" y="245.50" font-size="16.80" font-weight="bold" fill="#111">19127.2</text><text class="m" x="1759.80" y="282.50" font-size="16.80" font-weight="bold" fill="#111">5093.71</text><text class="m" x="1808.00" y="318.50" font-size="16.80" font-weight="bold" fill="#111">1317.4</text><text class="m" x="1808.00" y="354.00" font-size="16.80" font-weight="bold" fill="#111">45427.75</text><text class="m" x="1808.00" y="389.10" font-size="16.80" font-weight="bold" fill="#111">139</text><text class="m" x="1775.30" y="431.60" font-size="16.80" font-weight="bold" fill="#111">E</text><text class="m" x="1808.10" y="431.60" font-size="16.80" font-weight="bold" fill="#111">5914</text><text class="m" x="1775.30" y="471.70" font-size="16.80" font-weight="bold" fill="#111">D</text><text class="m" x="1808.10" y="471.70" font-size="16.80" font-weight="bold" fill="#111">831</text><text class="m" x="1775.30" y="515.70" font-size="16.80" font-weight="bold" fill="#111">G</text><text class="m" x="1808.10" y="515.70" font-size="16.80" font-weight="bold" fill="#111">316</text><text class="m" x="1775.30" y="556.80" font-size="16.80" font-weight="bold" fill="#111">E</text><text class="m" x="1808.10" y="556.80" font-size="16.80" font-weight="bold" fill="#111">661</text><text class="s" x="1013.00" y="586.60" font-size="9.50" font-weight="bold" fill="#222">15</text><text class="s" x="1030.20" y="586.60" font-size="9.50" fill="#333" textLength="21.70" lengthAdjust="spacingAndGlyphs">State</text><text class="s" x="1075.00" y="586.60" font-size="9.50" fill="#333" textLength="117.00" lengthAdjust="spacingAndGlyphs">Employer&#x27;s state ID number</text><text class="s" x="1273.20" y="587.30" font-size="9.50" fill="#333">16</text><text class="s" x="1288.80" y="587.30" font-size="9.50" fill="#333" textLength="92.00" lengthAdjust="spacingAndGlyphs">State wages, tips, etc.</text><text class="s" x="1419.00" y="587.30" font-size="9.50" fill="#333">17</text><text class="s" x="1434.80" y="587.30" font-size="9.50" fill="#333" textLength="71.00" lengthAdjust="spacingAndGlyphs">State income tax</text><text class="s" x="1560.70" y="587.30" font-size="9.50" fill="#333">18</text><text class="s" x="1576.70" y="587.30" font-size="9.50" fill="#333" textLength="93.30" lengthAdjust="spacingAndGlyphs">Local wages, tips, etc.</text><text class="s" x="1716.10" y="587.30" font-size="9.50" fill="#333">19</text><text class="s" x="1731.50" y="587.30" font-size="9.50" fill="#333" textLength="72.40" lengthAdjust="spacingAndGlyphs">Local income tax</text><text class="s" x="1857.00" y="587.30" font-size="9.50" fill="#333">20</text><text class="s" x="1873.70" y="587.30" font-size="9.50" fill="#333" textLength="58.50" lengthAdjust="spacingAndGlyphs">Locality name</text><text class="m" x="1021.80" y="607.60" font-size="16.80" font-weight="bold" fill="#111">WV</text><text class="m" x="1110.70" y="607.60" font-size="16.80" font-weight="bold" fill="#111">643-86-468</text><text class="m" x="1272.00" y="607.60" font-size="16.80" font-weight="bold" fill="#111">27219.05</text><text class="m" x="1418.30" y="607.60" font-size="16.80" font-weight="bold" fill="#111">1517.1</text><text class="m" x="1560.30" y="607.60" font-size="16.80" font-weight="bold" fill="#111">69617.91</text><text class="m" x="1716.00" y="607.60" font-size="16.80" font-weight="bold" fill="#111">7935.37</text><text class="m" x="1021.80" y="642.90" font-size="16.80" font-weight="bold" fill="#111">NJ</text><text class="m" x="1110.70" y="642.90" font-size="16.80" font-weight="bold" fill="#111">401-25-455</text><text class="m" x="1272.00" y="642.90" font-size="16.80" font-weight="bold" fill="#111">30829.36</text><text class="m" x="1418.30" y="642.90" font-size="16.80" font-weight="bold" fill="#111">1443.46</text><text class="m" x="1560.30" y="642.90" font-size="16.80" font-weight="bold" fill="#111">53793.26</text><text class="m" x="1716.00" y="642.90" font-size="16.80" font-weight="bold" fill="#111">11216.09</text><text class="m" x="1857.00" y="608.00" font-size="9.90" font-weight="bold" fill="#111" textLength="89.80" lengthAdjust="spacingAndGlyphs">Dominic Heights</text><text class="m" x="1857.00" y="642.80" font-size="12.40" font-weight="bold" fill="#111" textLength="89.80" lengthAdjust="spacingAndGlyphs">Robles Mount</text><text class="s" x="1114.00" y="667.00" font-size="16.00" font-weight="bold" fill="#111" textLength="116.00" lengthAdjust="spacingAndGlyphs">Wage and Tax</text><text class="s" x="1114.00" y="689.00" font-size="16.00" font-weight="bold" fill="#111" textLength="83.00" lengthAdjust="spacingAndGlyphs">Statement</text><text class="s" x="1012.00" y="690.60" font-size="8.20" font-weight="bold" fill="#222" textLength="51.00" lengthAdjust="spacingAndGlyphs">Form  W-2</text><text class="s" x="1012.00" y="707.00" font-size="11.00" font-weight="bold" fill="#111" textLength="351.00" lengthAdjust="spacingAndGlyphs">Copy B--To Be Filed with Employee&#x27;s FEDERAL Tax Return</text><text class="s" x="1012.00" y="722.60" font-size="11.00" fill="#222" textLength="375.00" lengthAdjust="spacingAndGlyphs">This information is being furnished to the Internal Revenue Service.</text><g fill="none" stroke="#000" stroke-width="3.30" stroke-linecap="round" stroke-linejoin="round"><path d="M1427.85 658.65 H1443.18 V671.15 H1427.85 V685.45 H1443.18"/><rect x="1456.14" y="658.65" width="15.33" height="26.80" rx="2"/><path d="M1484.43 658.65 H1492.10 V685.45 M1484.43 685.45 H1499.76 V672.65"/><rect x="1512.72" y="658.65" width="15.33" height="26.80" rx="2"/></g><text class="s" x="1670.70" y="668.00" font-size="9.60" fill="#222" textLength="276.70" lengthAdjust="spacingAndGlyphs">Department of the Treasury--Internal Revenue Service</text><line x1="1010.8" y1="763.2" x2="1950" y2="763.2" stroke="#777" stroke-width="2.4" stroke-dasharray="8.1 3"/><text class="s" x="1372.60" y="771.60" font-size="9.20" fill="#222" textLength="214.90" lengthAdjust="spacingAndGlyphs">Cut here.  Keep lower portion for your records.</text><line x1="1009.05" y1="798.55" x2="1951.00" y2="798.55" stroke="#3a3a3a" stroke-width="1.60"/><line x1="1009.75" y1="798.55" x2="1009.75" y2="1267.20" stroke="#3a3a3a" stroke-width="1.60"/><line x1="1950.30" y1="798.55" x2="1950.30" y2="1267.20" stroke="#3a3a3a" stroke-width="1.60"/><line x1="1170.25" y1="798.55" x2="1170.25" y2="834.05" stroke="#3a3a3a" stroke-width="1.60"/><line x1="1463.80" y1="798.55" x2="1463.80" y2="834.05" stroke="#3a3a3a" stroke-width="1.60"/><line x1="1009.75" y1="834.05" x2="1511.80" y2="834.05" stroke="#3a3a3a" stroke-width="1.60"/><line x1="1009.75" y1="870.50" x2="1511.80" y2="870.50" stroke="#3a3a3a" stroke-width="1.60"/><line x1="1009.75" y1="979.00" x2="1511.80" y2="979.00" stroke="#3a3a3a" stroke-width="1.60"/><line x1="1009.75" y1="1015.10" x2="1511.80" y2="1015.10" stroke="#3a3a3a" stroke-width="1.60"/><line x1="1511.80" y1="834.00" x2="1511.80" y2="1196.30" stroke="#3a3a3a" stroke-width="1.60"/><line x1="1733.30" y1="834.00" x2="1733.30" y2="1196.30" stroke="#3a3a3a" stroke-width="1.60"/><line x1="1511.80" y1="834.05" x2="1950.30" y2="834.05" stroke="#3a3a3a" stroke-width="1.60"/><line x1="1511.80" y1="870.30" x2="1950.30" y2="870.30" stroke="#3a3a3a" stroke-width="1.60"/><line x1="1511.80" y1="907.30" x2="1950.30" y2="907.30" stroke="#3a3a3a" stroke-width="1.60"/><line x1="1511.80" y1="943.00" x2="1950.30" y2="943.00" stroke="#3a3a3a" stroke-width="1.60"/><line x1="1511.80" y1="979.00" x2="1950.30" y2="979.00" stroke="#3a3a3a" stroke-width="1.60"/><line x1="1511.80" y1="1015.10" x2="1950.30" y2="1015.10" stroke="#3a3a3a" stroke-width="1.60"/><line x1="1511.80" y1="1056.60" x2="1733.30" y2="1056.60" stroke="#3a3a3a" stroke-width="1.60"/><line x1="1511.80" y1="1098.20" x2="1733.30" y2="1098.20" stroke="#3a3a3a" stroke-width="1.60"/><line x1="1733.30" y1="1057.00" x2="1950.30" y2="1057.00" stroke="#3a3a3a" stroke-width="1.60"/><line x1="1733.30" y1="1098.80" x2="1950.30" y2="1098.80" stroke="#3a3a3a" stroke-width="1.60"/><line x1="1733.30" y1="1139.80" x2="1950.30" y2="1139.80" stroke="#3a3a3a" stroke-width="1.60"/><line x1="1733.30" y1="1181.90" x2="1950.30" y2="1181.90" stroke="#3a3a3a" stroke-width="1.60"/><line x1="1804.30" y1="1026.90" x2="1804.30" y2="1056.60" stroke="#3a3a3a" stroke-width="1.60"/><line x1="1804.30" y1="1068.80" x2="1804.30" y2="1098.50" stroke="#3a3a3a" stroke-width="1.60"/><line x1="1804.30" y1="1110.60" x2="1804.30" y2="1140.30" stroke="#3a3a3a" stroke-width="1.60"/><line x1="1804.30" y1="1151.60" x2="1804.30" y2="1181.90" stroke="#3a3a3a" stroke-width="1.60"/><rect x="1533.40" y="1076.60" width="22.5" height="20.5" fill="none" stroke="#333" stroke-width="1.5"/><rect x="1600.40" y="1076.60" width="22.5" height="20.5" fill="none" stroke="#333" stroke-width="1.5"/><rect x="1666.60" y="1076.60" width="22.5" height="20.5" fill="none" stroke="#333" stroke-width="1.5"/><line x1="1009.75" y1="1196.30" x2="1950.30" y2="1196.30" stroke="#3a3a3a" stroke-width="1.60"/><line x1="1009.75" y1="1267.20" x2="1950.30" y2="1267.20" stroke="#3a3a3a" stroke-width="1.60"/><line x1="1010" y1="1231.80" x2="1950" y2="1231.80" stroke="#444" stroke-width="1.5" stroke-dasharray="3 1.6"/><line x1="1054.00" y1="1196.30" x2="1054.00" y2="1267.20" stroke="#3a3a3a" stroke-width="1.60"/><line x1="1267.80" y1="1196.30" x2="1267.80" y2="1267.20" stroke="#3a3a3a" stroke-width="1.60"/><line x1="1414.60" y1="1196.30" x2="1414.60" y2="1267.20" stroke="#3a3a3a" stroke-width="1.60"/><line x1="1556.00" y1="1196.30" x2="1556.00" y2="1267.20" stroke="#3a3a3a" stroke-width="1.60"/><line x1="1711.40" y1="1196.30" x2="1711.40" y2="1267.20" stroke="#3a3a3a" stroke-width="1.60"/><line x1="1852.90" y1="1196.30" x2="1852.90" y2="1267.20" stroke="#3a3a3a" stroke-width="1.60"/><text class="s" x="1089.70" y="811.55" font-size="15.30" font-weight="bold" fill="#111" textLength="78.20" lengthAdjust="spacingAndGlyphs" text-anchor="middle">REISSUED</text><text class="s" x="1089.90" y="831.05" font-size="15.40" font-weight="bold" fill="#111" textLength="92.70" lengthAdjust="spacingAndGlyphs" text-anchor="middle">STATEMENT</text><text class="s" x="1172.50" y="808.55" font-size="9.50" font-weight="bold" fill="#222">a</text><text class="s" x="1186.00" y="808.50" font-size="9.50" font-weight="bold" fill="#222" textLength="159.10" lengthAdjust="spacingAndGlyphs">Employee&#x27;s social security number</text><text class="s" x="1478.75" y="826.05" font-size="9.50" fill="#333" textLength="87.50" lengthAdjust="spacingAndGlyphs">OMB No. 1545-0008</text><text class="s" x="1580.75" y="807.80" font-size="8.40" fill="#333" textLength="366.30" lengthAdjust="spacingAndGlyphs">This information is being furnished to the Internal Revenue Service.  If you are required</text><text class="s" x="1580.75" y="819.80" font-size="8.40" fill="#333" textLength="351.50" lengthAdjust="spacingAndGlyphs">to file a tax return, a negligence penalty or other sanction may be imposed on you if</text><text class="s" x="1580.75" y="831.05" font-size="8.40" fill="#333" textLength="189.30" lengthAdjust="spacingAndGlyphs">this income is taxable and you fail to report it.</text><text class="s" x="1017.50" y="844.40" font-size="9.50" font-weight="bold" fill="#222">b</text><text class="s" x="1030.40" y="844.40" font-size="9.50" fill="#333" textLength="130.00" lengthAdjust="spacingAndGlyphs">Employer identification number</text><text class="s" x="1017.50" y="880.80" font-size="9.50" font-weight="bold" fill="#222">c</text><text class="s" x="1030.40" y="880.80" font-size="9.50" fill="#333" textLength="174.40" lengthAdjust="spacingAndGlyphs">Employer&#x27;s name, address, and ZIP code</text><text class="s" x="1017.50" y="988.80" font-size="9.50" font-weight="bold" fill="#222">d</text><text class="s" x="1030.40" y="988.80" font-size="9.50" fill="#333" textLength="65.80" lengthAdjust="spacingAndGlyphs">Control number</text><text class="s" x="1017.50" y="1024.70" font-size="9.50" font-weight="bold" fill="#222">e</text><text class="s" x="1030.40" y="1024.70" font-size="9.50" fill="#333" textLength="136.00" lengthAdjust="spacingAndGlyphs">Employee&#x27;s first name and initial</text><text class="s" x="1017.50" y="1193.50" font-size="9.50" font-weight="bold" fill="#222">f</text><text class="s" x="1030.40" y="1193.50" font-size="9.50" fill="#333" textLength="144.50" lengthAdjust="spacingAndGlyphs">Employee&#x27;s address and ZIP code</text><text class="s" x="1221.30" y="1024.70" font-size="9.50" fill="#333" textLength="44.60" lengthAdjust="spacingAndGlyphs">Last name</text><text class="m" x="1249.80" y="828.00" font-size="16.80" font-weight="bold" fill="#111">714-32-2105</text><text class="m" x="1057.50" y="863.80" font-size="16.80" font-weight="bold" fill="#111">24-3188810</text><text class="m" x="1057.20" y="901.40" font-size="17.30" font-weight="bold" fill="#111">Adams, Chase and Gilbert Inc</text><text class="m" x="1057.20" y="925.00" font-size="17.30" font-weight="bold" fill="#111">972 Gonzalez Dam</text><text class="m" x="1057.20" y="948.60" font-size="17.30" font-weight="bold" fill="#111">South Katherine   NC   95869-5178</text><text class="m" x="1057.50" y="1008.30" font-size="16.80" font-weight="bold" fill="#111">1173038</text><text class="m" x="1058.00" y="1062.60" font-size="19.20" font-weight="bold" fill="#111">Samantha   Martinez</text><text class="m" x="1058.00" y="1090.10" font-size="19.20" font-weight="bold" fill="#111">387 Burton Fords Apt. 407</text><text class="m" x="1058.00" y="1117.10" font-size="19.20" font-weight="bold" fill="#111">Brandontown   ID     12359-6940</text><text class="s" x="1530.60" y="844.20" font-size="9.50" font-weight="bold" fill="#222" text-anchor="middle">1</text><text class="s" x="1549.70" y="844.20" font-size="9.50" fill="#333" textLength="139.60" lengthAdjust="spacingAndGlyphs">Wages, tips, other compensation</text><text class="s" x="1530.60" y="880.70" font-size="9.50" font-weight="bold" fill="#222" text-anchor="middle">3</text><text class="s" x="1549.70" y="880.70" font-size="9.50" fill="#333" textLength="91.00" lengthAdjust="spacingAndGlyphs">Social security wages</text><text class="s" x="1530.60" y="916.80" font-size="9.50" font-weight="bold" fill="#222" text-anchor="middle">5</text><text class="s" x="1549.70" y="916.80" font-size="9.50" fill="#333" textLength="105.50" lengthAdjust="spacingAndGlyphs">Medicare wages and tips</text><text class="s" x="1530.60" y="952.80" font-size="9.50" font-weight="bold" fill="#222" text-anchor="middle">7</text><text class="s" x="1549.70" y="952.80" font-size="9.50" fill="#333" textLength="78.50" lengthAdjust="spacingAndGlyphs">Social security tips</text><text class="s" x="1530.60" y="988.80" font-size="9.50" font-weight="bold" fill="#222" text-anchor="middle">9</text><text class="s" x="1549.70" y="988.80" font-size="9.50" fill="#333" textLength="95.50" lengthAdjust="spacingAndGlyphs">Advance EIC payment</text><text class="s" x="1527.20" y="1024.80" font-size="9.50" font-weight="bold" fill="#222" text-anchor="middle">11</text><text class="s" x="1549.70" y="1024.80" font-size="9.50" fill="#333" textLength="78.50" lengthAdjust="spacingAndGlyphs">Nonqualified plans</text><text class="s" x="1527.20" y="1108.00" font-size="9.50" font-weight="bold" fill="#222" text-anchor="middle">14</text><text class="s" x="1549.70" y="1108.00" font-size="9.50" fill="#333" textLength="175.30" lengthAdjust="spacingAndGlyphs">Other (see enclosed Notice to Employee)</text><text class="s" x="1521.00" y="1066.10" font-size="9.90" font-weight="bold" fill="#222" textLength="9.90" lengthAdjust="spacingAndGlyphs">13</text><text class="s" x="1535.70" y="1065.40" font-size="7.60" fill="#333" textLength="31.30" lengthAdjust="spacingAndGlyphs">Statutory</text><text class="s" x="1535.70" y="1075.20" font-size="7.60" fill="#333" textLength="33.60" lengthAdjust="spacingAndGlyphs">employee</text><text class="s" x="1602.00" y="1065.40" font-size="7.60" fill="#333" textLength="38.10" lengthAdjust="spacingAndGlyphs">Retirement</text><text class="s" x="1602.00" y="1075.20" font-size="7.60" fill="#333" textLength="15.20" lengthAdjust="spacingAndGlyphs">plan</text><text class="s" x="1668.70" y="1065.40" font-size="7.60" fill="#333" textLength="37.70" lengthAdjust="spacingAndGlyphs">Third-party</text><text class="s" x="1668.70" y="1075.20" font-size="7.60" fill="#333" textLength="28.80" lengthAdjust="spacingAndGlyphs">sick pay</text><text class="s" x="1750.60" y="844.20" font-size="9.50" font-weight="bold" fill="#222" text-anchor="middle">2</text><text class="s" x="1771.40" y="844.20" font-size="9.50" fill="#333" textLength="118.00" lengthAdjust="spacingAndGlyphs">Federal income tax withheld</text><text class="s" x="1750.60" y="880.70" font-size="9.50" font-weight="bold" fill="#222" text-anchor="middle">4</text><text class="s" x="1771.40" y="880.70" font-size="9.50" fill="#333" textLength="113.75" lengthAdjust="spacingAndGlyphs">Social security tax withheld</text><text class="s" x="1750.60" y="916.80" font-size="9.50" font-weight="bold" fill="#222" text-anchor="middle">6</text><text class="s" x="1771.40" y="916.80" font-size="9.50" fill="#333" textLength="91.75" lengthAdjust="spacingAndGlyphs">Medicare tax withheld</text><text class="s" x="1750.60" y="952.80" font-size="9.50" font-weight="bold" fill="#222" text-anchor="middle">8</text><text class="s" x="1771.40" y="952.80" font-size="9.50" fill="#333" textLength="56.25" lengthAdjust="spacingAndGlyphs">Allocated tips</text><text class="s" x="1747.50" y="988.80" font-size="9.50" font-weight="bold" fill="#222" text-anchor="middle">10</text><text class="s" x="1771.40" y="988.80" font-size="9.50" fill="#333" textLength="104.25" lengthAdjust="spacingAndGlyphs">Dependent care benefits</text><text class="s" x="1743.20" y="1024.80" font-size="9.50" font-weight="bold" fill="#222">12a</text><text class="s" x="1772.50" y="1024.80" font-size="9.50" font-weight="bold" fill="#222" textLength="123.00" lengthAdjust="spacingAndGlyphs">See instructions for box 12</text><text class="s" x="1743.20" y="1066.00" font-size="9.50" font-weight="bold" fill="#222">12b</text><text class="s" x="1743.20" y="1107.90" font-size="9.50" font-weight="bold" fill="#222">12c</text><text class="s" x="1743.20" y="1149.10" font-size="9.50" font-weight="bold" fill="#222">12d</text><text class="m" x="1560.50" y="864.00" font-size="16.80" font-weight="bold" fill="#111">56081.18</text><text class="m" x="1560.50" y="901.40" font-size="16.80" font-weight="bold" fill="#111">66584.46</text><text class="m" x="1560.20" y="937.40" font-size="16.80" font-weight="bold" fill="#111">45427.75</text><text class="m" x="1560.20" y="973.00" font-size="16.80" font-weight="bold" fill="#111">66584.46</text><text class="m" x="1560.20" y="1050.40" font-size="16.80" font-weight="bold" fill="#111">102</text><text class="m" x="1759.80" y="864.30" font-size="16.80" font-weight="bold" fill="#111">19127.2</text><text class="m" x="1759.80" y="901.30" font-size="16.80" font-weight="bold" fill="#111">5093.71</text><text class="m" x="1808.00" y="937.30" font-size="16.80" font-weight="bold" fill="#111">1317.4</text><text class="m" x="1808.00" y="972.80" font-size="16.80" font-weight="bold" fill="#111">45427.75</text><text class="m" x="1808.00" y="1007.90" font-size="16.80" font-weight="bold" fill="#111">139</text><text class="m" x="1775.30" y="1050.40" font-size="16.80" font-weight="bold" fill="#111">E</text><text class="m" x="1808.10" y="1050.40" font-size="16.80" font-weight="bold" fill="#111">5914</text><text class="m" x="1775.30" y="1090.50" font-size="16.80" font-weight="bold" fill="#111">D</text><text class="m" x="1808.10" y="1090.50" font-size="16.80" font-weight="bold" fill="#111">831</text><text class="m" x="1775.30" y="1134.50" font-size="16.80" font-weight="bold" fill="#111">G</text><text class="m" x="1808.10" y="1134.50" font-size="16.80" font-weight="bold" fill="#111">316</text><text class="m" x="1775.30" y="1175.60" font-size="16.80" font-weight="bold" fill="#111">E</text><text class="m" x="1808.10" y="1175.60" font-size="16.80" font-weight="bold" fill="#111">661</text><text class="s" x="1013.00" y="1205.40" font-size="9.50" font-weight="bold" fill="#222">15</text><text class="s" x="1030.20" y="1205.40" font-size="9.50" fill="#333" textLength="21.70" lengthAdjust="spacingAndGlyphs">State</text><text class="s" x="1075.00" y="1205.40" font-size="9.50" fill="#333" textLength="117.00" lengthAdjust="spacingAndGlyphs">Employer&#x27;s state ID number</text><text class="s" x="1273.20" y="1206.10" font-size="9.50" fill="#333">16</text><text class="s" x="1288.80" y="1206.10" font-size="9.50" fill="#333" textLength="92.00" lengthAdjust="spacingAndGlyphs">State wages, tips, etc.</text><text class="s" x="1419.00" y="1206.10" font-size="9.50" fill="#333">17</text><text class="s" x="1434.80" y="1206.10" font-size="9.50" fill="#333" textLength="71.00" lengthAdjust="spacingAndGlyphs">State income tax</text><text class="s" x="1560.70" y="1206.10" font-size="9.50" fill="#333">18</text><text class="s" x="1576.70" y="1206.10" font-size="9.50" fill="#333" textLength="93.30" lengthAdjust="spacingAndGlyphs">Local wages, tips, etc.</text><text class="s" x="1716.10" y="1206.10" font-size="9.50" fill="#333">19</text><text class="s" x="1731.50" y="1206.10" font-size="9.50" fill="#333" textLength="72.40" lengthAdjust="spacingAndGlyphs">Local income tax</text><text class="s" x="1857.00" y="1206.10" font-size="9.50" fill="#333">20</text><text class="s" x="1873.70" y="1206.10" font-size="9.50" fill="#333" textLength="58.50" lengthAdjust="spacingAndGlyphs">Locality name</text><text class="m" x="1021.80" y="1226.40" font-size="16.80" font-weight="bold" fill="#111">WV</text><text class="m" x="1110.70" y="1226.40" font-size="16.80" font-weight="bold" fill="#111">643-86-468</text><text class="m" x="1272.00" y="1226.40" font-size="16.80" font-weight="bold" fill="#111">27219.05</text><text class="m" x="1418.30" y="1226.40" font-size="16.80" font-weight="bold" fill="#111">1517.1</text><text class="m" x="1560.30" y="1226.40" font-size="16.80" font-weight="bold" fill="#111">69617.91</text><text class="m" x="1716.00" y="1226.40" font-size="16.80" font-weight="bold" fill="#111">7935.37</text><text class="m" x="1021.80" y="1261.70" font-size="16.80" font-weight="bold" fill="#111">NJ</text><text class="m" x="1110.70" y="1261.70" font-size="16.80" font-weight="bold" fill="#111">401-25-455</text><text class="m" x="1272.00" y="1261.70" font-size="16.80" font-weight="bold" fill="#111">30829.36</text><text class="m" x="1418.30" y="1261.70" font-size="16.80" font-weight="bold" fill="#111">1443.46</text><text class="m" x="1560.30" y="1261.70" font-size="16.80" font-weight="bold" fill="#111">53793.26</text><text class="m" x="1716.00" y="1261.70" font-size="16.80" font-weight="bold" fill="#111">11216.09</text><text class="m" x="1857.00" y="1226.80" font-size="9.90" font-weight="bold" fill="#111" textLength="89.80" lengthAdjust="spacingAndGlyphs">Dominic Heights</text><text class="m" x="1857.00" y="1261.60" font-size="12.40" font-weight="bold" fill="#111" textLength="89.80" lengthAdjust="spacingAndGlyphs">Robles Mount</text><text class="s" x="1114.00" y="1285.00" font-size="16.00" font-weight="bold" fill="#111" textLength="116.00" lengthAdjust="spacingAndGlyphs">Wage and Tax</text><text class="s" x="1114.00" y="1306.60" font-size="16.00" font-weight="bold" fill="#111" textLength="83.00" lengthAdjust="spacingAndGlyphs">Statement</text><text class="s" x="1012.00" y="1306.60" font-size="8.20" font-weight="bold" fill="#222" textLength="51.00" lengthAdjust="spacingAndGlyphs">Form  W-2</text><text class="s" x="1012.00" y="1323.00" font-size="11.00" font-weight="bold" fill="#111" textLength="221.00" lengthAdjust="spacingAndGlyphs">Copy C For EMPLOYEE&#x27;S RECORDS.</text><text class="s" x="1012.00" y="1338.60" font-size="11.00" font-weight="bold" fill="#111" textLength="211.00" lengthAdjust="spacingAndGlyphs">(See enclosed Notice to Employee.)</text><g fill="none" stroke="#000" stroke-width="3.30" stroke-linecap="round" stroke-linejoin="round"><path d="M1427.85 1277.15 H1443.18 V1289.65 H1427.85 V1303.95 H1443.18"/><rect x="1456.14" y="1277.15" width="15.33" height="26.80" rx="2"/><path d="M1484.43 1277.15 H1492.10 V1303.95 M1484.43 1303.95 H1499.76 V1291.15"/><rect x="1512.72" y="1277.15" width="15.33" height="26.80" rx="2"/></g><text class="s" x="1670.70" y="1285.00" font-size="9.60" fill="#222" textLength="276.70" lengthAdjust="spacingAndGlyphs">Department of the Treasury--Internal Revenue Service</text><text class="s" x="1713.30" y="1304.20" font-size="10.60" font-weight="bold" fill="#111" textLength="80.50" lengthAdjust="spacingAndGlyphs">Safe, accurate,</text><text class="s" x="1713.30" y="1319.20" font-size="10.60" font-weight="bold" fill="#111" textLength="60.50" lengthAdjust="spacingAndGlyphs">FAST!  Use</text><rect x="1806" y="1293" width="104" height="33" fill="#fafafa"/><g><ellipse cx="1857.70" cy="1309.15" rx="51.40" ry="12.15" fill="#1c1c1c"/><text x="1810.93" y="1309.39" font-size="8.75" font-weight="bold" font-style="italic" fill="#fff" stroke="#fff" stroke-width="0.30" class="s" textLength="12.85" lengthAdjust="spacingAndGlyphs">IRS</text><text x="1823.26" y="1317.17" font-size="25.51" font-weight="bold" font-style="italic" fill="#fff" stroke="#fff" stroke-width="1.00" class="s" textLength="14.91" lengthAdjust="spacingAndGlyphs">e</text><text x="1860.27" y="1316.44" font-size="19.93" font-weight="bold" font-style="italic" fill="#fff" stroke="#fff" stroke-width="0.70" class="s" textLength="35.98" lengthAdjust="spacingAndGlyphs">file</text><path d="M1839.71 1311.58 L1849.48 1308.42 L1849.99 1310.37 L1860.27 1305.02 L1852.05 1307.45 L1851.53 1305.75 Z" fill="#fff" stroke="#fff" stroke-width="0.6"/></g></svg></div></body></html>
